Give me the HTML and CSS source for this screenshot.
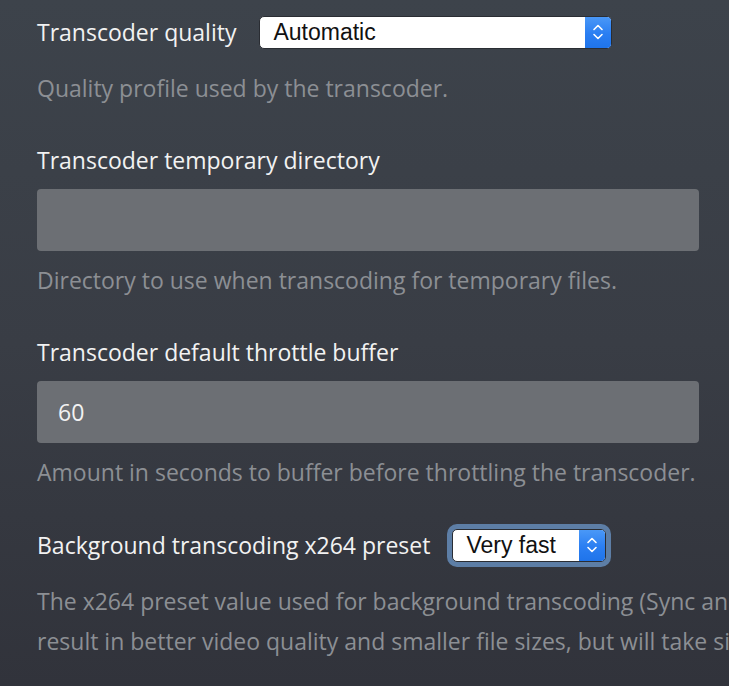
FILE: index.html
```html
<!DOCTYPE html>
<html>
<head>
<meta charset="utf-8">
<link rel="stylesheet" href="styles.css">
</head>
<body>
<div class="page">
  <div class="group group-row">
    <div class="row">
      <label class="label">Transcoder quality</label>
      <div class="select select-wide">
        <span class="select-text">Automatic</span>
        <span class="stepper"><svg width="12" height="20" viewBox="0 0 12 20"><path d="M2 7.5 L6 3.5 L10 7.5 M2 12.5 L6 16.5 L10 12.5" fill="none" stroke="#fff" stroke-width="1.6" stroke-linecap="round" stroke-linejoin="round"/></svg></span>
      </div>
    </div>
    <p class="help">Quality profile used by the transcoder.</p>
  </div>

  <div class="group">
    <label class="label">Transcoder temporary directory</label>
    <div class="input"></div>
    <p class="help help-input">Directory to use when transcoding for temporary files.</p>
  </div>

  <div class="group">
    <label class="label">Transcoder default throttle buffer</label>
    <div class="input">60</div>
    <p class="help help-input">Amount in seconds to buffer before throttling the transcoder.</p>
  </div>

  <div class="group group-row group-last">
    <div class="row">
      <label class="label">Background transcoding x264 preset</label>
      <div class="select select-narrow focused">
        <span class="select-text">Very fast</span>
        <span class="stepper"><svg width="12" height="20" viewBox="0 0 12 20"><path d="M2 7.5 L6 3.5 L10 7.5 M2 12.5 L6 16.5 L10 12.5" fill="none" stroke="#fff" stroke-width="1.6" stroke-linecap="round" stroke-linejoin="round"/></svg></span>
      </div>
    </div>
    <p class="help help-wrap">The x264 preset value used for background transcoding (Sync and Media Optimizer). Slower values will<br>result in better video quality and smaller file sizes, but will take significantly longer to complete processing.</p>
  </div>
</div>
</body>
</html>
```

FILE: styles.css
```css
html, body {
  margin: 0;
  padding: 0;
  height: 100%;
  overflow: hidden;
}
body {
  background: linear-gradient(180deg, #3d434b 0%, #393d45 50%, #31333b 100%);
  font-family: "Open Sans", "Liberation Sans", sans-serif;
  color: #f0f0f0;
}
.page {
  padding: 12px 0 0 37px;
  width: 1400px;
}
.group {
  margin-bottom: 38px;
}
.group-row {
  margin-bottom: 38px;
}
.group-last {
  margin-top: -5px;
}
.row {
  display: flex;
  align-items: center;
  height: 40px;
}
.label {
  display: block;
  font-size: 23px;
  line-height: 28px;
  color: #f2f2f2;
}
.group > .label {
  margin-bottom: 15px;
}
.help {
  margin: 16px 0 0 0;
  font-size: 23px;
  line-height: 40px;
  color: #8c8f94;
}
.help-input {
  margin-top: 9px;
}
.help-wrap {
  white-space: nowrap;
}
.input {
  box-sizing: border-box;
  width: 662px;
  height: 62px;
  border-radius: 4px;
  background: #6c6f74;
  padding-left: 21px;
  font-size: 23px;
  line-height: 62px;
  color: #f2f2f2;
}
.select {
  box-sizing: border-box;
  height: 33px;
  display: flex;
  align-items: stretch;
  background: #fff;
  border: 1px solid #2a2d33;
  border-radius: 5px;
  font-family: "Liberation Sans", Arial, sans-serif;
  font-size: 23px;
  color: #111;
}
.select-wide {
  width: 353px;
  margin-left: 23px;
}
.select-narrow {
  width: 154px;
  margin-left: 22px;
}
.focused {
  box-shadow: 0 0 0 5px #5d7ea6;
}
.select-text {
  flex: 1;
  padding-left: 13px;
  line-height: 31px;
}
.stepper {
  width: 26px;
  background: linear-gradient(180deg, #4a98f7 0%, #2a7ef2 55%, #1f74ea 100%);
  border-radius: 0 4px 4px 0;
  display: flex;
  align-items: center;
  justify-content: center;
}
```
